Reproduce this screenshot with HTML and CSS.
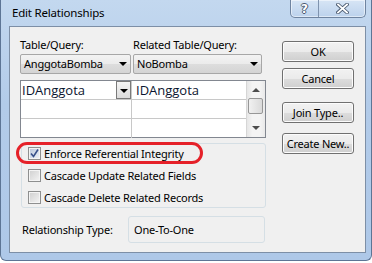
FILE: index.html
```html
<!DOCTYPE html>
<html lang="en">
<head>
    <meta charset="UTF-8">
    <title>Edit Relationships</title>
    <link rel="stylesheet" href="styles.css">
</head>
<body>

    <div class="window">
        <div class="titlebar">
            <span class="title">Edit Relationships</span>
            <div class="caption-buttons">
                <span class="cap-btn help">?</span>
                <span class="cap-btn close">
                    <svg width="13" height="11" viewBox="0 0 13 11">
                        <path d="M2 1.5 L11 9.5 M11 1.5 L2 9.5" stroke="#4a5a70" stroke-width="3.6" stroke-linecap="square"/>
                        <path d="M2 1.5 L11 9.5 M11 1.5 L2 9.5" stroke="#ffffff" stroke-width="1.8" stroke-linecap="square"/>
                    </svg>
                </span>
            </div>
        </div>

        <div class="client">
            <div class="main">
                <div class="tables">
                    <div class="table-col left-col">
                        <div class="field-label">Table/Query:</div>
                        <div class="combo">AnggotaBomba<span class="arrow"></span></div>
                    </div>
                    <div class="table-col right-col">
                        <div class="field-label">Related Table/Query:</div>
                        <div class="combo">NoBomba<span class="arrow"></span></div>
                    </div>
                </div>

                <div class="grid">
                    <div class="cells">
                        <div class="row">
                            <div class="cell first editing">IDAnggota<span class="cell-drop"><span class="arrow"></span></span></div>
                            <div class="cell second">IDAnggota</div>
                        </div>
                        <div class="row">
                            <div class="cell first"></div>
                            <div class="cell second"></div>
                        </div>
                        <div class="row last">
                            <div class="cell first"></div>
                            <div class="cell second"></div>
                        </div>
                    </div>
                    <div class="scrollbar">
                        <span class="sb-arrow up"></span>
                        <span class="thumb"></span>
                        <span class="sb-arrow down"></span>
                    </div>
                </div>

                <div class="options">
                    <div class="highlight"></div>
                    <div class="check-row">
                        <span class="checkbox checked">
                            <svg width="9" height="9" viewBox="0 0 9 9">
                                <path d="M1 4.5 L3.5 7.5 L8 0.5" fill="none" stroke="#37508a" stroke-width="1.6"/>
                            </svg>
                        </span>
                        Enforce Referential Integrity
                    </div>
                    <div class="check-row">
                        <span class="checkbox"></span>
                        Cascade Update Related Fields
                    </div>
                    <div class="check-row">
                        <span class="checkbox"></span>
                        Cascade Delete Related Records
                    </div>
                </div>

                <div class="rel-type">
                    <span class="rel-label">Relationship Type:</span>
                    <div class="rel-value">One-To-One</div>
                </div>
            </div>

            <div class="buttons">
                <div class="btn ok">OK</div>
                <div class="btn cancel">Cancel</div>
                <div class="btn join">Join Type..</div>
                <div class="btn create">Create New..</div>
            </div>
        </div>
    </div>

</body>
</html>
```

FILE: styles.css
```css
body {
    margin: 0;
    padding: 0;
    background-color: #ffffff;
    font-family: "Noto Sans", "Open Sans", sans-serif;
    font-size: 11px;
    letter-spacing: -0.2px;
    color: #000;
}

.window {
    width: 372px;
    height: 261px;
    box-sizing: border-box;
    border: 1px solid #5d7595;
    border-top: none;
    border-radius: 0 0 6px 6px;
    background: linear-gradient(#c3d8ef, #b2cbe9 40%, #aec8e8);
    padding: 0 5px 0 8px;
}

.titlebar {
    height: 26px;
    display: flex;
    align-items: flex-start;
}

.title {
    margin-top: 5px;
    margin-left: 3px;
    font-size: 11.5px;
    color: #000;
}

.caption-buttons {
    margin-left: auto;
    display: flex;
    border: 1px solid #6f84a0;
    border-top: none;
    border-radius: 0 0 5px 5px;
    overflow: hidden;
    background: linear-gradient(#d7e5f5, #bcd2ec);
    box-shadow: inset 0 0 0 1px rgba(255, 255, 255, 0.5);
}

.cap-btn {
    height: 17px;
    display: flex;
    align-items: center;
    justify-content: center;
}

.help {
    width: 27px;
    border-right: 1px solid #7f93ae;
    font-family: "DejaVu Sans", sans-serif;
    font-weight: bold;
    font-size: 12px;
    color: #fff;
    text-shadow: 1px 0 0 #4a5a70, -1px 0 0 #4a5a70, 0 1px 0 #4a5a70, 0 -1px 0 #4a5a70;
}

.close {
    width: 46px;
}

.client {
    height: 227px;
    box-sizing: border-box;
    border: 1px solid #7d8fa6;
    background-color: #f0f0f0;
    display: flex;
}

.main {
    width: 246px;
    margin-left: 10px;
    padding-top: 10px;
}

.tables {
    display: flex;
    gap: 2px;
}

.left-col {
    width: 111px;
}

.right-col {
    width: 129px;
}

.field-label {
    height: 15px;
    line-height: 15px;
    margin-bottom: 2px;
}

.combo {
    position: relative;
    height: 20px;
    line-height: 18px;
    box-sizing: border-box;
    border: 1px solid #a7a7a7;
    border-radius: 2px;
    padding-left: 3px;
    background: linear-gradient(#f3f3f3 0%, #ebebeb 50%, #dddddd 51%, #d4d4d4 100%);
}

.arrow {
    position: absolute;
    width: 0;
    height: 0;
    border-left: 4px solid transparent;
    border-right: 4px solid transparent;
    border-top: 4px solid #000;
}

.combo .arrow {
    right: 3px;
    top: 7px;
}

.grid {
    margin-top: 6px;
    height: 58px;
    box-sizing: border-box;
    border: 1px solid #828790;
    background-color: #fff;
    display: flex;
}

.cells {
    width: 225px;
}

.row {
    display: flex;
    height: 19px;
    box-sizing: border-box;
    border-bottom: 1px solid #c8c8c8;
}

.row.last {
    border-bottom: none;
}

.cell {
    position: relative;
    font-family: "Open Sans", sans-serif;
    font-size: 13px;
    letter-spacing: 0;
    line-height: 18px;
    color: #0b1530;
}

.cell.first {
    width: 111px;
    padding-left: 1px;
    box-sizing: border-box;
    border-right: 1px solid #c8c8c8;
}

.cell.second {
    width: 113px;
    padding-left: 4px;
    box-sizing: border-box;
}

.cell-drop {
    position: absolute;
    right: 0;
    top: 0;
    width: 15px;
    height: 18px;
    box-sizing: border-box;
    border: 1px solid #7a7a7a;
    background: linear-gradient(#f4f4f4, #dcdcdc);
}

.cell-drop .arrow {
    left: 3px;
    top: 7px;
}

.scrollbar {
    position: relative;
    width: 18px;
    border-left: 1px solid #d6d6d6;
    background: linear-gradient(90deg, #e6e6e6, #f4f4f4 30%, #f4f4f4 70%, #e9e9e9);
}

.sb-arrow {
    position: absolute;
    left: 5px;
    width: 0;
    height: 0;
    border-left: 4px solid transparent;
    border-right: 4px solid transparent;
}

.sb-arrow.up {
    top: 7px;
    border-bottom: 4px solid #4d4d4d;
}

.sb-arrow.down {
    bottom: 7px;
    border-top: 4px solid #4d4d4d;
}

.thumb {
    position: absolute;
    left: 1px;
    top: 17px;
    width: 15px;
    height: 16px;
    box-sizing: border-box;
    border: 1px solid #979797;
    border-radius: 2px;
    background: linear-gradient(90deg, #f1f1f1, #dadada);
}

.options {
    position: relative;
    margin-top: 5px;
    margin-left: 1px;
    width: 245px;
    height: 65px;
    box-sizing: border-box;
    border: 1px solid #d5dfe5;
    border-radius: 3px;
    padding-left: 6px;
}

.highlight {
    position: absolute;
    left: -6px;
    top: -2px;
    width: 187px;
    height: 22px;
    box-sizing: border-box;
    border: 3px solid #e52129;
    border-radius: 12px;
}

.check-row {
    height: 18px;
    margin-bottom: 4px;
    display: flex;
    align-items: center;
    gap: 3px;
}

.checkbox {
    width: 13px;
    height: 13px;
    box-sizing: border-box;
    border: 1px solid #8e8f8f;
    background: linear-gradient(135deg, #cfcfcf, #f4f4f4);
    box-shadow: inset 0 0 0 1px #f4f4f4;
    display: flex;
    align-items: center;
    justify-content: center;
}

.checkbox.checked {
    background: linear-gradient(135deg, #b9c6dc, #eef2f8);
}

.rel-type {
    margin-top: 8px;
    display: flex;
    align-items: center;
}

.rel-label {
    width: 106px;
    padding-left: 2px;
}

.rel-value {
    width: 137px;
    height: 27px;
    line-height: 25px;
    box-sizing: border-box;
    border: 1px solid #d5dfe5;
    border-radius: 3px;
    padding-left: 5px;
}

.buttons {
    margin-left: 16px;
    padding-top: 14px;
}

.btn {
    width: 72px;
    height: 21px;
    line-height: 19px;
    box-sizing: border-box;
    border: 1px solid #707070;
    border-radius: 3px;
    text-align: center;
    background: linear-gradient(#f2f2f2 0%, #ebebeb 50%, #dddddd 51%, #cfcfcf 100%);
    box-shadow: inset 0 0 0 1px #fcfcfc;
}

.cancel {
    margin-top: 6px;
}

.join {
    margin-top: 13px;
}

.create {
    margin-top: 10px;
}
```
